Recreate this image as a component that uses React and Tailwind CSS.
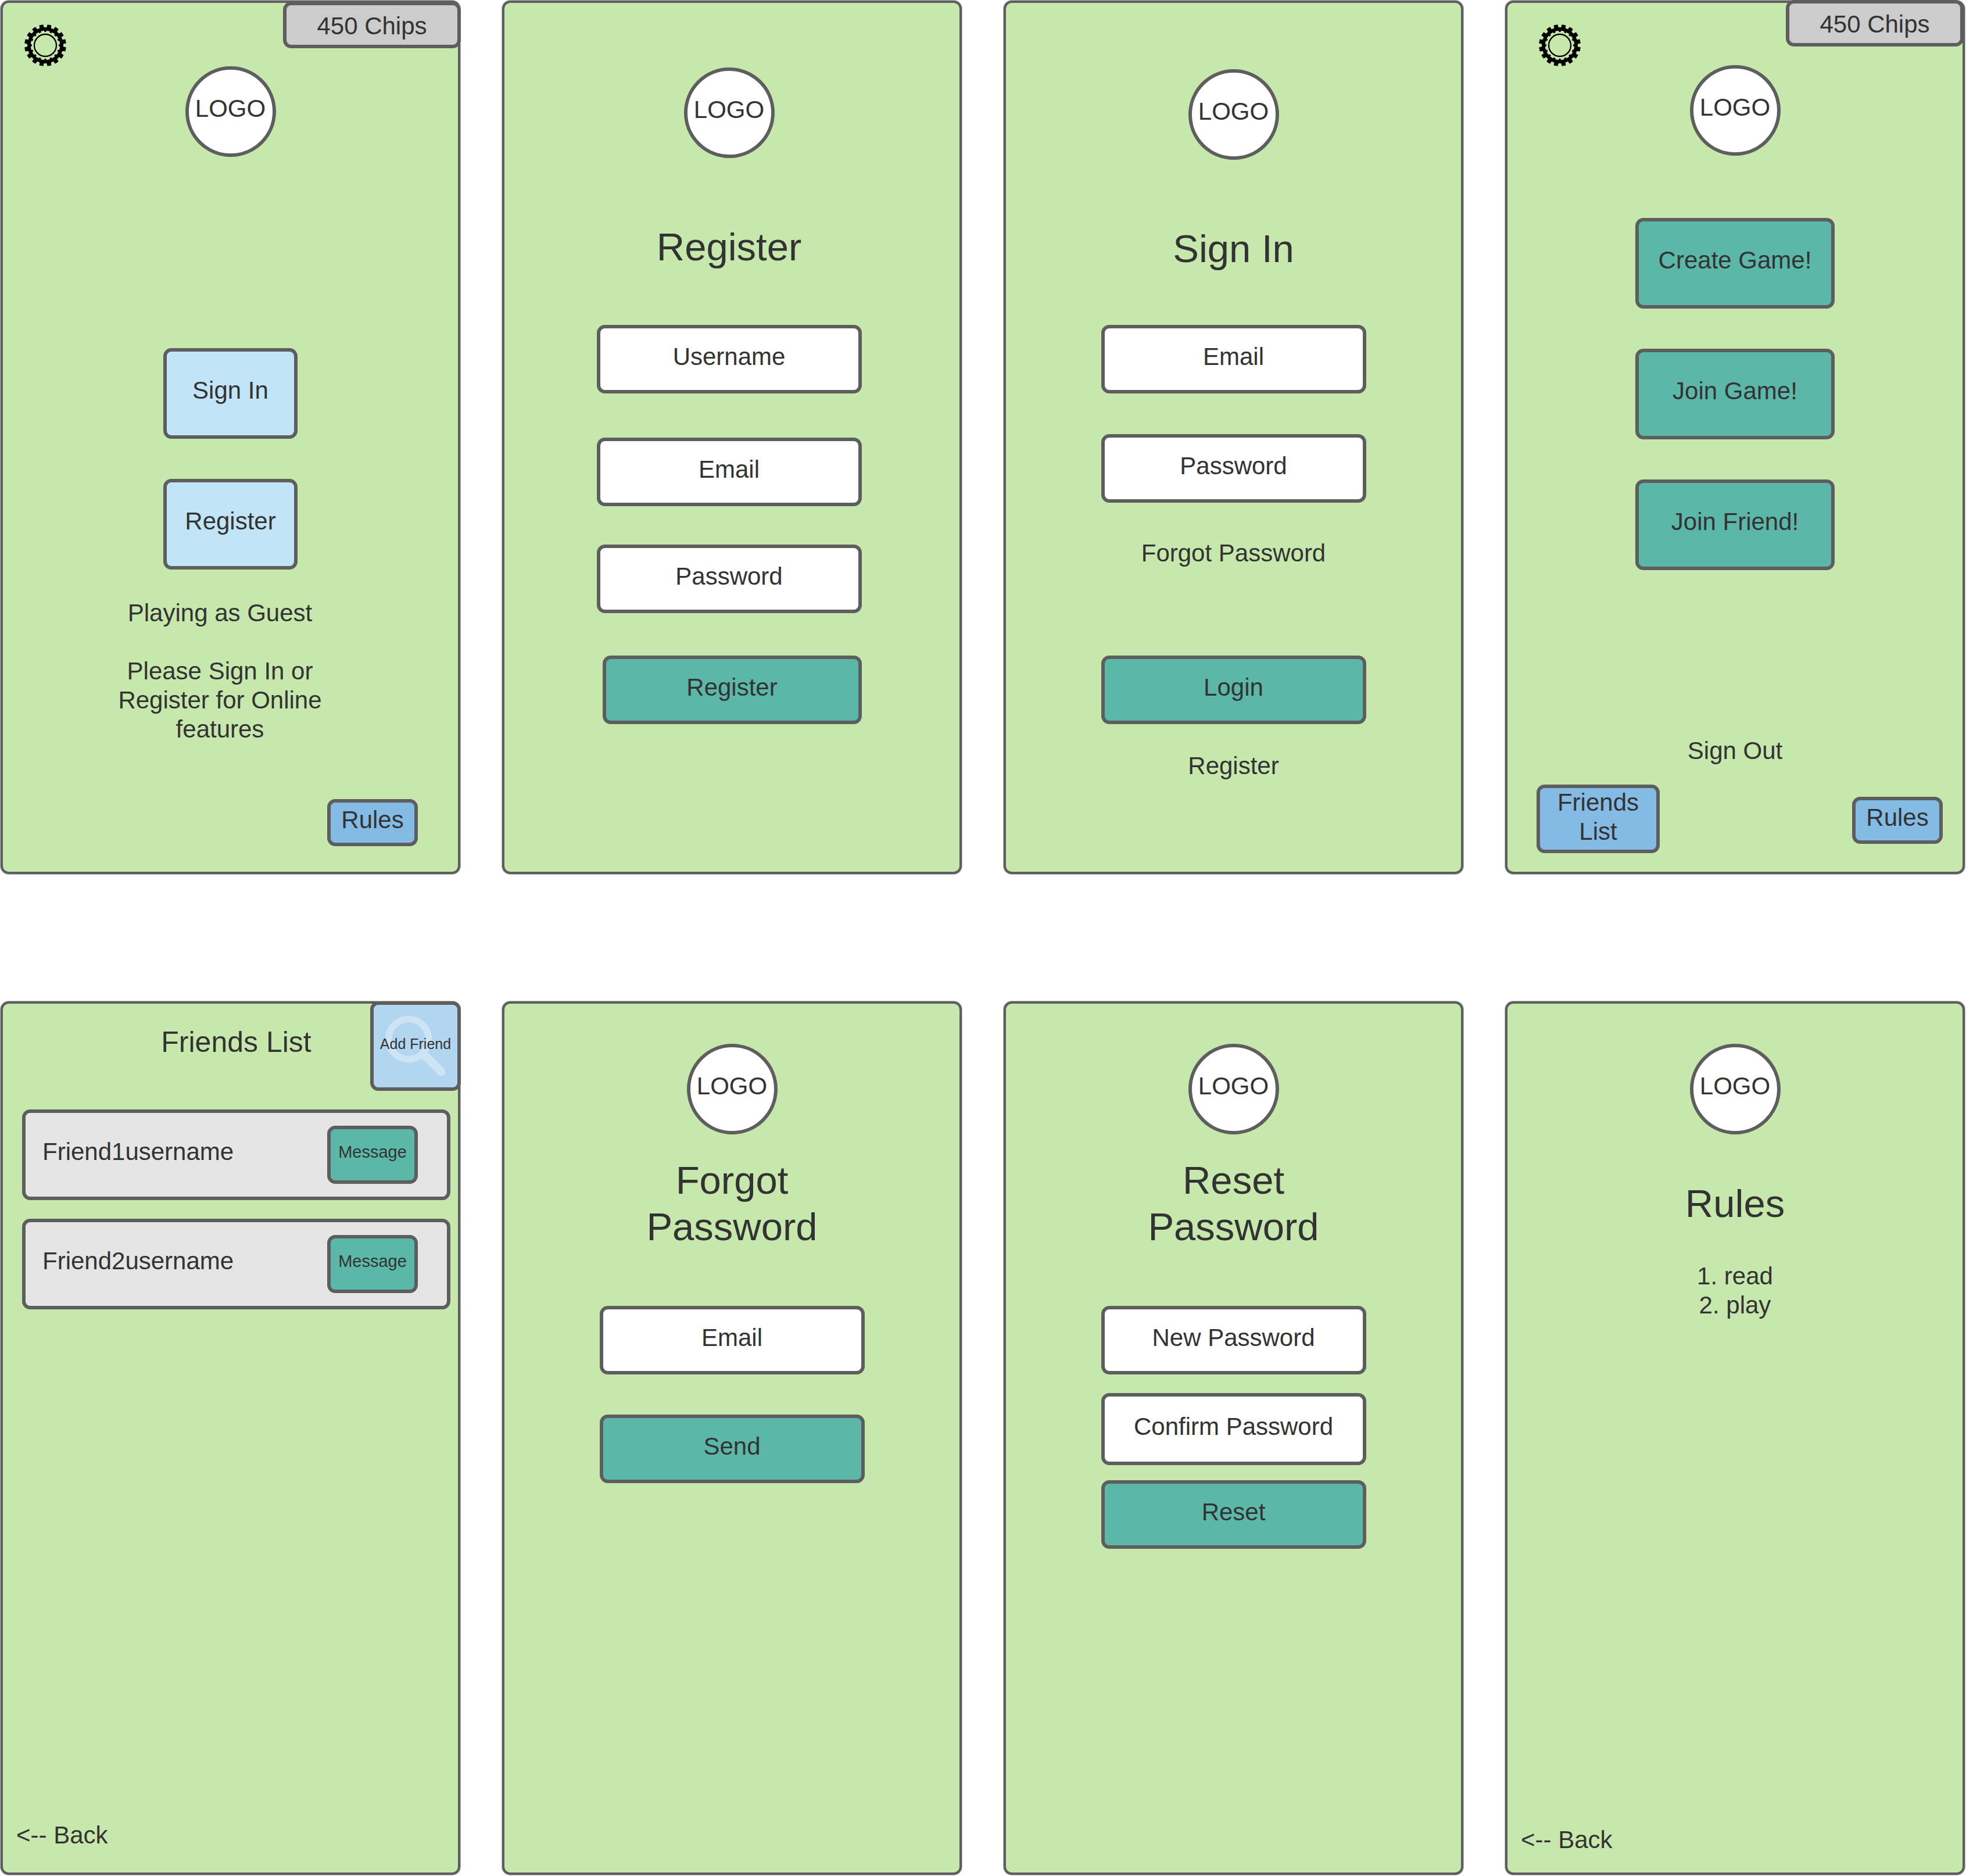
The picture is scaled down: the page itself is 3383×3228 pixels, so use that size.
import React from "react";

const BOX = "border-6 border-[#5e5e5e] rounded-[14px] text-[#333333]";
const FIELD =
  "w-full border-6 border-[#5e5e5e] rounded-[14px] bg-white pb-2 text-center text-[#333333] placeholder:text-[#333333] placeholder:opacity-100 outline-none";

function Screen({ label, className = "", children }) {
  return (
    <section
      aria-label={label}
      className={`relative flex min-w-0 flex-col items-center rounded-[14px] border-4 border-[#5e5e5e] bg-[#c7e8ac] shadow-[0_0_0_1px_rgba(94,94,94,0.45)] ${className}`}
    >
      {children}
    </section>
  );
}

function Logo({ className = "" }) {
  return (
    <div
      className={`flex size-[156px] shrink-0 items-center justify-center rounded-full border-6 border-[#5e5e5e] bg-white pb-2.5 ${className}`}
    >
      LOGO
    </div>
  );
}

function Title({ className = "", children }) {
  return (
    <h1 className={`w-[400px] text-center text-[67px] leading-[80px] ${className}`}>{children}</h1>
  );
}

function Button({ className = "", pad = "pb-2.5", children }) {
  return (
    <button
      type="button"
      className={`flex shrink-0 items-center justify-center ${pad} ${BOX} ${className}`}
    >
      {children}
    </button>
  );
}

function Field({ label, type = "text", className = "h-[118px]" }) {
  return <input type={type} aria-label={label} placeholder={label} className={`${FIELD} ${className}`} />;
}

function TextLink({ className = "", children }) {
  return (
    <a href="#" className={`block ${className}`}>
      {children}
    </a>
  );
}

function Chips({ className = "" }) {
  return (
    <div
      className={`absolute flex w-[306px] items-center justify-center bg-[#cccccc] ${BOX} ${className}`}
    >
      <span className="pt-1">450 Chips</span>
    </div>
  );
}

const polar = (radius, degrees) => {
  const a = (degrees * Math.PI) / 180;
  return `${(radius * Math.sin(a)).toFixed(2)} ${(-radius * Math.cos(a)).toFixed(2)}`;
};

// Closed outline that alternates between a base radius and a tooth-tip radius.
const toothed = (base, tip, offset, halfBase, halfTip) =>
  Array.from({ length: 16 }, (_, i) => {
    const c = offset + i * 22.5;
    return [
      polar(base, c - halfBase),
      polar(tip, c - halfTip),
      polar(tip, c + halfTip),
      polar(base, c + halfBase),
    ].join("L");
  }).join("L");

const GEAR_PATH = `M${toothed(93, 108, 11.25, 7, 5.5)}ZM${toothed(76, 69, 0, 5.5, 3)}Z`;

function GearButton({ className = "" }) {
  return (
    <button type="button" aria-label="Settings" className={`absolute size-[72px] ${className}`}>
      <svg viewBox="-108 -108 216 216" className="size-full" aria-hidden="true">
        <path d={GEAR_PATH} fillRule="evenodd" fill="#000" />
        <circle r="57" fill="none" stroke="#000" strokeWidth="7" />
      </svg>
    </button>
  );
}

function FriendRow({ name }) {
  return (
    <li className={`flex h-[156px] items-center justify-between bg-[#e5e5e5] pr-[50px] pl-[29px] ${BOX}`}>
      <span className="pb-2.5">{name}</span>
      <Button className="h-[100px] w-[156px] bg-[#5bb8a8] text-[29px]">Message</Button>
    </li>
  );
}

export default function App() {
  return (
    <main className="grid min-h-screen grid-cols-4 grid-rows-2 gap-x-[72px] gap-y-[219px] bg-white pt-px pr-0.5 pb-0.5 pl-px font-['Liberation_Sans',Arial,sans-serif] text-[42px] leading-[50px] text-[#333333]">
      <Screen label="Guest home">
        <GearButton className="top-[37px] left-[37px]" />
        <Chips className="-top-0.5 -right-[5px] h-20" />
        <Logo className="mt-[109px]" />
        <Button className="mt-[329px] h-[156px] w-[231px] bg-[#c1e4f7]">Sign In</Button>
        <Button className="mt-[69px] h-[156px] w-[231px] bg-[#c1e4f7]">Register</Button>
        <div className="mt-[50px] mr-9 w-[360px] text-center">
          <p>Playing as Guest</p>
          <p className="mt-[50px]">Please Sign In or Register for Online features</p>
        </div>
        <Button className="mt-[95px] mr-[69px] h-[81px] w-[156px] self-end bg-[#83bbe5]">Rules</Button>
      </Screen>

      <Screen label="Register" className="pr-2.5">
        <Logo className="mt-[111px]" />
        <Title className="mt-[113px]">Register</Title>
        <form className="mt-[94px] flex w-[456px] flex-col">
          <Field label="Username" />
          <Field label="Email" type="email" className="mt-[76px] h-[118px]" />
          <Field label="Password" type="password" className="mt-[66px] h-[118px]" />
          <Button pad="pb-2" className="mt-[73px] h-[118px] w-[446px] self-end bg-[#5bb8a8]">
            Register
          </Button>
        </form>
      </Screen>

      <Screen label="Sign in">
        <Logo className="mt-[114px]" />
        <Title className="mt-[113px]">Sign In</Title>
        <form className="mt-[91px] flex w-[456px] flex-col items-center">
          <Field label="Email" type="email" />
          <Field label="Password" type="password" className="mt-[70px] h-[118px]" />
          <TextLink className="mt-[62px]">Forgot Password</TextLink>
          <Button pad="pb-2" className="mt-[151px] h-[118px] w-full bg-[#5bb8a8]">
            Login
          </Button>
          <TextLink className="mt-[47px]">Register</TextLink>
        </form>
      </Screen>

      <Screen label="Home">
        <GearButton className="top-[37px] left-[54px]" />
        <Chips className="-top-[5px] -right-0.5 h-20" />
        <Logo className="mt-[107px]" />
        <div className="mt-[107px] flex w-[343px] flex-col gap-[69px]">
          <Button className="h-[156px] bg-[#5bb8a8]">Create Game!</Button>
          <Button className="h-[156px] bg-[#5bb8a8]">Join Game!</Button>
          <Button className="h-[156px] bg-[#5bb8a8]">Join Friend!</Button>
        </div>
        <TextLink className="mt-[286px]">Sign Out</TextLink>
        <div className="mt-[33px] flex w-full items-start justify-between pr-[34px] pl-[50px]">
          <Button pad="pb-1.5" className="h-[118px] w-[212px] bg-[#83bbe5]">
            Friends
            <br />
            List
          </Button>
          <Button className="mt-[21px] h-[81px] w-[156px] bg-[#83bbe5]">Rules</Button>
        </div>
      </Screen>

      <Screen label="Friends list">
        <button
          type="button"
          className={`absolute -top-1 -right-[5px] flex h-[154px] w-[156px] items-center justify-center bg-[#b2d6ef] pb-2 text-[25px] ${BOX}`}
        >
          <svg viewBox="0 0 144 142" className="absolute inset-0 size-full" aria-hidden="true">
            <g fill="none" stroke="#cce4f4">
              <circle cx="60" cy="59" r="34.5" strokeWidth="11.5" />
              <path d="M85 84L92 91" strokeWidth="14.5" />
              <path d="M92 91L116 115" strokeWidth="14.5" strokeLinecap="round" />
            </g>
          </svg>
          <span className="relative">Add Friend</span>
        </button>
        <h1 className="mt-9 pl-5 text-[50px] leading-[60px]">Friends List</h1>
        <ul className="mt-[86px] flex w-full flex-col gap-8 pr-[13px] pl-[33px]">
          <FriendRow name="Friend1username" />
          <FriendRow name="Friend2username" />
        </ul>
        <TextLink className="mt-auto mb-[39px] ml-[23px] self-start">&lt;-- Back</TextLink>
      </Screen>

      <Screen label="Forgot password">
        <Logo className="mt-[69px]" />
        <Title className="mt-[39px]">Forgot Password</Title>
        <form className="mt-24 flex w-[456px] flex-col">
          <Field label="Email" type="email" />
          <Button pad="pb-2" className="mt-[69px] h-[118px] bg-[#5bb8a8]">
            Send
          </Button>
        </form>
      </Screen>

      <Screen label="Reset password">
        <Logo className="mt-[69px]" />
        <Title className="mt-[39px]">Reset Password</Title>
        <form className="mt-24 flex w-[456px] flex-col">
          <Field label="New Password" type="password" />
          <Field label="Confirm Password" type="password" className="mt-8 h-[124px]" />
          <Button pad="pb-2" className="mt-[26px] h-[118px] bg-[#5bb8a8]">
            Reset
          </Button>
        </form>
      </Screen>

      <Screen label="Rules">
        <Logo className="mt-[69px]" />
        <Title className="mt-[79px]">Rules</Title>
        <ol className="mt-[60px] list-inside list-decimal text-center">
          <li>read</li>
          <li>play</li>
        </ol>
        <TextLink className="mt-auto mb-[31px] ml-[23px] self-start">&lt;-- Back</TextLink>
      </Screen>
    </main>
  );
}
